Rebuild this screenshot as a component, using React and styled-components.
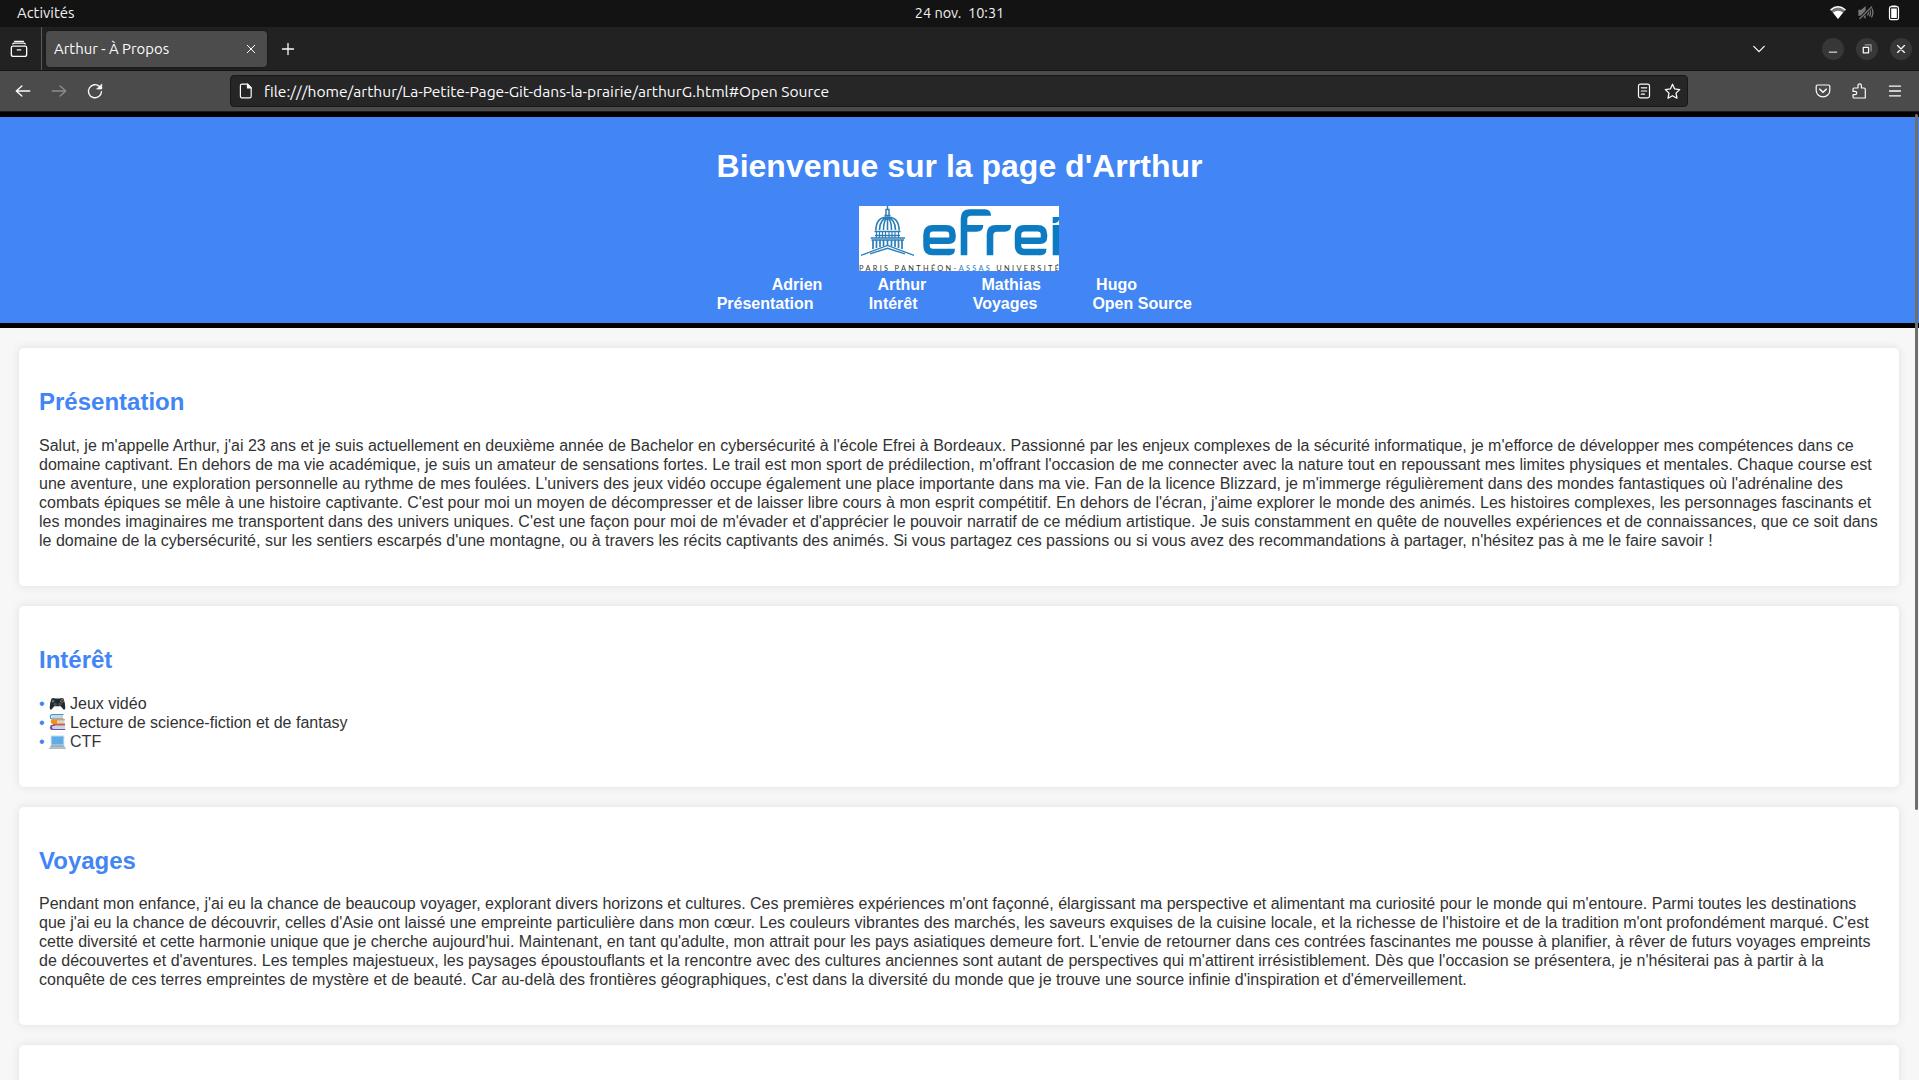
import React from "react";
import styled, { createGlobalStyle } from "styled-components";

const Global = createGlobalStyle`
  html, body { margin: 0; padding: 0; overflow: hidden; background: #f7f7f7; }
  * { box-sizing: border-box; }
`;

const ui = `Ubuntu, "Noto Sans", "Open Sans", sans-serif`;

const Screen = styled.div`
  width: 1919px;
  height: 1080px;
  display: flex;
  flex-direction: column;
  overflow: hidden;
`;

const SystemBar = styled.div`
  flex: none;
  height: 27px;
  background: #131313;
  color: #f2f2f2;
  display: grid;
  grid-template-columns: 1fr auto 1fr;
  align-items: center;
  padding: 0 17px 1px 17px;
  font: 14px/26px ${ui};
  white-space: pre;
`;

const Label = styled.span`
  font-size: ${(p) => p.$size}px;
  white-space: pre;
`;

const Tray = styled.div`
  display: flex;
  justify-content: flex-end;
  align-items: center;
  gap: 12px;
`;

const TabStrip = styled.div`
  flex: none;
  height: 44px;
  background: #222222;
  border-bottom: 1px solid #151515;
  display: flex;
  align-items: center;
  color: #fbfbfe;
  padding-right: 7px;
`;

const ViewButton = styled.div`
  width: 42px;
  height: 43px;
  padding-left: 10px;
  display: flex;
  align-items: center;
  border-right: 1px solid #5a5a5a;
`;

const Tab = styled.div`
  width: 221px;
  height: 36px;
  margin-left: 4px;
  border-radius: 4px;
  background: #4c4c4c;
  box-shadow: 0 0 3px rgba(0, 0, 0, 0.5);
  display: flex;
  align-items: center;
  justify-content: space-between;
  padding: 0 11px 0 8px;
  font: 14.5px/37px ${ui};
`;

const NewTab = styled.div`
  display: flex;
  margin-left: 13px;
  flex: 1;
`;

const WindowControls = styled.div`
  display: flex;
  align-items: center;
  gap: 12px;
  margin-left: 56px;
`;

const RoundButton = styled.div`
  width: 22px;
  height: 22px;
  border-radius: 50%;
  background: #373737;
  display: flex;
  align-items: center;
  justify-content: center;
`;

const Toolbar = styled.div`
  flex: none;
  height: 41px;
  background: #4b4b4b;
  border-bottom: 1px solid #1c1c1c;
  display: flex;
  align-items: center;
  color: #fbfbfe;
`;

const NavButtons = styled.div`
  width: 230px;
  padding-left: 14px;
  display: flex;
  gap: 18px;
`;

const UrlBar = styled.div`
  width: 1458px;
  height: 32px;
  background: #262626;
  border: 1px solid #181818;
  border-radius: 4px;
  display: flex;
  align-items: center;
  padding: 0 6px 0 7px;
  font: 15px/30px ${ui};
`;

const Address = styled.div`
  flex: 1;
  margin-left: 10px;
`;

const UrlActions = styled.div`
  display: flex;
  gap: 12px;
`;

const Extensions = styled.div`
  flex: 1;
  display: flex;
  justify-content: flex-end;
  gap: 20px;
  padding-right: 16px;
`;

const Page = styled.div`
  position: relative;
  flex: 1;
  overflow: hidden;
  background: #f7f7f7;
  color: #333;
  font: 16px/19px Arial, "Liberation Sans", sans-serif;
`;

const Thumb = styled.div`
  position: absolute;
  top: 2px;
  right: 1px;
  width: 3px;
  height: 696px;
  border-radius: 2px;
  background: #6e6e6e;
`;

const Header = styled.header`
  height: 216px;
  background: #4285f4;
  border: solid #000;
  border-width: 5px 0;
  padding: 10px 0;
  color: #fff;
  display: flex;
  flex-direction: column;
  align-items: center;
`;

const Title = styled.h1`
  font-size: 32px;
  line-height: 36px;
  margin: 21px 0;
`;

const LogoBox = styled.div`
  height: 70px;
  padding: 1px 1px 0 0;
  svg { display: block; overflow: visible; }
`;

const Menu = styled.nav`
  display: flex;
  gap: 55.1px;
  padding-right: 10.4px;
  font-weight: bold;
`;

const Card = styled.section`
  margin: 20px 20px 0 19px;
  padding: 20px;
  background: #fff;
  border-radius: 5px;
  box-shadow: 0 0 10px rgba(0, 0, 0, 0.1);
`;

const Heading = styled.h2`
  margin: 19.92px 0;
  font-size: 24px;
  line-height: 28px;
  color: #4285f4;
`;

const Text = styled.p`
  margin: 0 0 16px;
`;

const List = styled.ul`
  margin: 0 0 16px;
  padding: 0;
  list-style: none;
`;

const Item = styled.li`
  height: 19px;
  display: flex;
  white-space: pre;
  &::before {
    content: "• ";
    color: #4285f4;
  }
`;

const Picto = styled.span`
  width: 21px;
  height: 19px;
  svg { display: block; }
`;

const Icon = ({ s = 16, w = 1.2, c = "currentColor", children }) => (
  <svg width={s} height={s} viewBox="0 0 16 16" fill="none" stroke={c} strokeWidth={w} strokeLinecap="round" strokeLinejoin="round">
    {children}
  </svg>
);

const LetterE = ({ x }) => (
  <g transform={`translate(${x} 0)`}>
    <path d="M89.500 46.050H74q-6.500 0-6.500-6.500V28.700q0-6.500 6.500-6.500H87q6.500 0 6.500 6.500V31q0 3.800-3.800 3.800H68" fill="none" stroke="#0d7bc1" strokeWidth="6.500" />
    <path d="M89 42.800H96q0 6.500-6 6.500H89z" fill="#0d7bc1" />
  </g>
);

const Logo = () => (
  <svg width="200" height="65" viewBox="0 0 200 65">
    <rect width="200" height="65" fill="#fff" />
    <LetterE x={0} />
    <LetterE x={91.5} />
    <g fill="#0d7bc1">
      <path d="M101.700 49.300V12.500q0-9.200 9.200-9.200H126q6 0 6 6.500H112q-3.700 0-3.700 3.700V19H124.300q0 6.700-6.700 6.700H108.300V49.300z" />
      <path d="M127.700 49.300V28.200q0-9.200 9.200-9.200H152.200q0 6.700-6.700 6.700H138q-3.700 0-3.700 3.700V49.300z" />
      <path d="M193.700 19H200V49.300H193.700zM193.700 11H200V13.500Q199.500 17.300 193.700 17.300z" />
    </g>
    <g fill="none" stroke="#2c7db8" strokeWidth="1.1">
      <path d="M28.5 0V4M27 3.5h3v6h-3zM25.5 9.5h6" strokeWidth="1.5" />
      <path d="M16.8 24.5C17 15 22 11 28.5 11S40 15 40.2 24.5M20.5 24C20.500 17 24 12 28.500 11.500M36.500 24C36.500 17 33 12 28.500 11.500M24.500 24C24.500 18 26 13 28.500 12M32.500 24C32.500 18 31 13 28.500 12M28.500 11V24" strokeWidth="1.6" />
      <path d="M15.500 25.500H41.500M16 29.500H41M11.700 32H46M12.500 34H45" strokeWidth="1.5" />
      <path d="M17.500 26V32M20.500 26V32M23.500 26V32M26.500 26V32M30 26V32M33 26V32M36 26V32M39.500 26V32" />
      <path d="M14 34V43M17.500 34V42M21 34V41M24.500 34V40M28.500 34V39M32.500 34V40M36 34V41M39.500 34V42M43 34V43" strokeWidth="1.7" />
      <path d="M2 49.300L28.500 39.500L55 49.300M11 47.800L28.500 42.300L46 47.800" strokeWidth="1.3" />
    </g>
    <text x="0" y="64.800" fontFamily="Lato, sans-serif" fontSize="7.400" fill="#333" textLength="200" lengthAdjust="spacing">
      PARIS PANTHÉON-<tspan fill="#2b80bb">ASSAS</tspan> UNIVERSITÉ
    </text>
  </svg>
);

const Gamepad = () => (
  <svg width="17" height="19" viewBox="0 0 17 19">
    <path d="M2.500 4.500Q5 3.500 6 4.500H11Q12 3.500 14.500 4.500Q16.300 9 16.300 14Q16 16.200 14.500 15.500L11.800 12.300H5.200L2.500 15.500Q1 16.200 .7 14Q.7 9 2.500 4.500z" fill="#23282c" />
    <circle cx="6.200" cy="10.300" r="1.600" fill="#4a5258" />
    <circle cx="10.800" cy="10.300" r="1.600" fill="#4a5258" />
    <path d="M4 5.700V8.700M2.500 7.200H5.500" stroke="#77828a" />
    <circle cx="13" cy="5.800" r=".7" fill="#f4a73b" />
    <circle cx="14.300" cy="7.200" r=".7" fill="#dd4b5a" />
    <circle cx="11.700" cy="7.200" r=".7" fill="#55acee" />
    <circle cx="13" cy="8.600" r=".7" fill="#77b255" />
  </svg>
);

const Books = () => (
  <svg width="17" height="19" viewBox="0 0 17 19">
    <path d="M3 1.500H14V6H3z" fill="#ccd6dd" />
    <path d="M14.500 1H3Q.7 1 .7 3.500T3 6.500H14.500V5.500H3.500Q2 5.500 2 3.700T3.500 2H14.500z" fill="#3b94d9" />
    <path d="M4 7H15.500V10.500H4z" fill="#ccd6dd" />
    <path d="M16 6.300H4Q1.700 6.300 1.700 8.600T4 11.300H16V10.200H8V7.300H16z" fill="#f4900c" />
    <path d="M3 12H16V16H3z" fill="#ccd6dd" />
    <path d="M16 11.300H4V12.300H16z" fill="#be1931" />
    <path d="M16.300 17H3Q.9 17 .9 14.500T3 11.800H6V12.800H4.500Q3 13 3 14.400T4.500 16H16.300z" fill="#744eaa" />
  </svg>
);

const Laptop = () => (
  <svg width="17" height="19" viewBox="0 0 17 19">
    <path d="M2.500 3.500H14.500Q15.300 3.500 15.300 4.500V13H1.700V4.500Q1.700 3.500 2.500 3.500z" fill="#ccd6dd" />
    <path d="M2.700 4.500H14.300V12.500H2.700z" fill="#5dadec" />
    <path d="M2 13H15L16.800 16.500H.2z" fill="#b8c5ce" />
    <path d="M2.500 13.500H14.500L15.300 15H1.700z" fill="#9aaab4" />
    <path d="M.2 16H16.800V17H.2z" fill="#aebbc3" />
  </svg>
);

const names = ["Adrien", "Arthur", "Mathias", "Hugo"];
const anchors = ["Présentation", "Intérêt", "Voyages", "Open Source"];
const interests = [
  [Gamepad, "Jeux vidéo"],
  [Books, "Lecture de science-fiction et de fantasy"],
  [Laptop, "CTF"],
];

export default function App() {
  return (
    <Screen>
      <Global />
      <SystemBar>
        <Label $size={14.9}>Activités</Label>
        <Label $size={14.5}>{"24 nov.  10:31"}</Label>
        <Tray>
          <svg width="16" height="14" viewBox="0 0 16 14">
            <path d="M.5 4Q8-2.500 15.500 4L8 13z" fill="#777" />
            <path d="M.5 4Q8-2.500 15.500 4" fill="none" stroke="#fff" strokeWidth="1.400" />
            <path d="M3 6.500Q8 3 13 6.500L8 13z" fill="#fff" />
          </svg>
          <svg width="16" height="14" viewBox="0 0 16 14" fill="none" stroke="#777" strokeWidth="1.300">
            <path d="M1 4.500H3.500L7 1.500V11.500L3.500 9H1z" fill="#777" />
            <path d="M9.500 4.500Q11 7 9.500 9.500M11.500 3Q13.500 7 11.500 10.500M13 1Q16.500 6 13.500 11.500" />
            <path d="M1.500 13L14 0" stroke="#131313" strokeWidth="3" />
            <path d="M1.500 13L14 .5" />
          </svg>
          <svg width="16" height="16" viewBox="0 0 16 16">
            <path d="M5.500 .5h5v1.500h-5z" fill="#fff" />
            <rect x="3.500" y="1.700" width="9" height="13" rx="1.800" fill="none" stroke="#fff" strokeWidth="1.200" />
            <rect x="5.200" y="3.500" width="5.600" height="9.500" fill="#fff" />
          </svg>
        </Tray>
      </SystemBar>

      <TabStrip>
        <ViewButton>
          <Icon s={18}><path d="M4 1.200H12M2.500 3.500Q3 2.800 4 2.800H12Q13 2.800 13.500 3.500M2.500 5.500H13.500Q14.800 5.500 14.800 6.800V12.800Q14.800 14.600 13 14.600H3Q1.200 14.600 1.200 12.800V6.800Q1.200 5.500 2.500 5.500zM6.500 8.800H9.500" /></Icon>
        </ViewButton>
        <Tab>
          <Label $size={14.9}>Arthur - À Propos</Label>
          <Icon s={10} w={1.6}><path d="M2 2L14 14M14 2L2 14" /></Icon>
        </Tab>
        <NewTab><Icon w={1.3}><path d="M8 2.500V13.500M2.500 8H13.500" /></Icon></NewTab>
        <Icon s={14} w={1.5}><path d="M2 5L8 11L14 5" /></Icon>
        <WindowControls>
          <RoundButton><Icon s={10} w={1.6}><path d="M2 13H14" /></Icon></RoundButton>
          <RoundButton>
            <Icon s={10} w={2}><path d="M2 5.500H10.500V14H2z" /><path d="M5 1.500H14.500V11" stroke="#999" /></Icon>
          </RoundButton>
          <RoundButton><Icon s={10} w={2}><path d="M2.500 2.500L13.500 13.500M13.500 2.500L2.500 13.500" /></Icon></RoundButton>
        </WindowControls>
      </TabStrip>

      <Toolbar>
        <NavButtons>
          <Icon s={18}><path d="M14 8H2M7 3.500L2 8L7 12.500" /></Icon>
          <Icon s={18} c="#8d8d8d"><path d="M2 8H14M9 3.500L14 8L9 12.500" /></Icon>
          <Icon s={18}><path d="M13.800 8.500A5.800 5.800 0 1 1 12 4L13.500 5" /><path d="M14 2V6.300H9.700z" fill="currentColor" strokeWidth=".6" /></Icon>
        </NavButtons>
        <UrlBar>
          <Icon><path d="M4 1.200H9.500L13.200 5V13.200Q13.200 14.800 11.600 14.800H4Q2.400 14.800 2.400 13.200V2.800Q2.400 1.200 4 1.200z" /><path d="M9.500 1.200V5H13.200z" fill="currentColor" /></Icon>
          <Address>
            <Label $size={15.6}>file:///home/arthur/La-Petite-Page-Git-dans-la-prairie/arthurG.html#Open Source</Label>
          </Address>
          <UrlActions>
            <Icon><rect x="2.500" y="1.200" width="11" height="13.600" rx="1.800" /><path d="M5.300 4.800H10.700M5.300 8H10.700M5.300 11.200H8.500" /></Icon>
            <Icon s={17}><path d="M8 1.200L10 5.600L14.800 6.200L11.300 9.500L12.200 14.300L8 12L3.800 14.300L4.700 9.500L1.200 6.200L6 5.600z" /></Icon>
          </UrlActions>
        </UrlBar>
        <Extensions>
          <Icon><path d="M2.500 2H13.500Q14.800 2 14.800 3.300V7.500A6.800 6.300 0 0 1 1.200 7.500V3.300Q1.200 2 2.500 2z" /><path d="M4.800 6.200L8 9.300L11.200 6.200" strokeWidth="1.600" /></Icon>
          <Icon><path d="M3 5H7V2.500A1.700 1.700 0 0 1 10.400 2.500V5H13Q14.300 5 14.300 6.300V15H3.300Q2 15 2 13.700V11.700H4A1.700 1.700 0 0 0 4 8.300H2V6.500Q2 5 3 5" /></Icon>
          <Icon w={1.300}><path d="M2.500 3.200H13.500M2.500 8H13.500M2.500 12.800H13.500" /></Icon>
        </Extensions>
      </Toolbar>

      <Page>
        <Header>
          <Title>Bienvenue sur la page d'Arrthur</Title>
          <LogoBox><Logo /></LogoBox>
          <Menu>{names.map((n) => <span key={n}>{n}</span>)}</Menu>
          <Menu>{anchors.map((n) => <span key={n}>{n}</span>)}</Menu>
        </Header>
        <Card>
          <Heading>Présentation</Heading>
          <Text>
            Salut, je m'appelle Arthur, j'ai 23 ans et je suis actuellement en deuxième année de Bachelor en cybersécurité à l'école Efrei à Bordeaux. Passionné par les enjeux complexes de la sécurité informatique, je m'efforce de développer mes compétences dans ce domaine captivant. En dehors de ma vie académique, je suis un amateur de sensations fortes. Le trail est mon sport de prédilection, m'offrant l'occasion de me connecter avec la nature tout en repoussant mes limites physiques et mentales. Chaque course est une aventure, une exploration personnelle au rythme de mes foulées. L'univers des jeux vidéo occupe également une place importante dans ma vie. Fan de la licence Blizzard, je m'immerge régulièrement dans des mondes fantastiques où l'adrénaline des combats épiques se mêle à une histoire captivante. C'est pour moi un moyen de décompresser et de laisser libre cours à mon esprit compétitif. En dehors de l'écran, j'aime explorer le monde des animés. Les histoires complexes, les personnages fascinants et les mondes imaginaires me transportent dans des univers uniques. C'est une façon pour moi de m'évader et d'apprécier le pouvoir narratif de ce médium artistique. Je suis constamment en quête de nouvelles expériences et de connaissances, que ce soit dans le domaine de la cybersécurité, sur les sentiers escarpés d'une montagne, ou à travers les récits captivants des animés. Si vous partagez ces passions ou si vous avez des recommandations à partager, n'hésitez pas à me le faire savoir !
          </Text>
        </Card>
        <Card>
          <Heading>Intérêt</Heading>
          <List>
            {interests.map(([Drawing, label]) => (
              <Item key={label}><Picto><Drawing /></Picto>{label}</Item>
            ))}
          </List>
        </Card>
        <Card>
          <Heading>Voyages</Heading>
          <Text>
            Pendant mon enfance, j'ai eu la chance de beaucoup voyager, explorant divers horizons et cultures. Ces premières expériences m'ont façonné, élargissant ma perspective et alimentant ma curiosité pour le monde qui m'entoure. Parmi toutes les destinations que j'ai eu la chance de découvrir, celles d'Asie ont laissé une empreinte particulière dans mon cœur. Les couleurs vibrantes des marchés, les saveurs exquises de la cuisine locale, et la richesse de l'histoire et de la tradition m'ont profondément marqué. C'est cette diversité et cette harmonie unique que je cherche aujourd'hui. Maintenant, en tant qu'adulte, mon attrait pour les pays asiatiques demeure fort. L'envie de retourner dans ces contrées fascinantes me pousse à planifier, à rêver de futurs voyages empreints de découvertes et d'aventures. Les temples majestueux, les paysages époustouflants et la rencontre avec des cultures anciennes sont autant de perspectives qui m'attirent irrésistiblement. Dès que l'occasion se présentera, je n'hésiterai pas à partir à la conquête de ces terres empreintes de mystère et de beauté. Car au-delà des frontières géographiques, c'est dans la diversité du monde que je trouve une source infinie d'inspiration et d'émerveillement.
          </Text>
        </Card>
        <Card />
        <Thumb />
      </Page>
    </Screen>
  );
}
